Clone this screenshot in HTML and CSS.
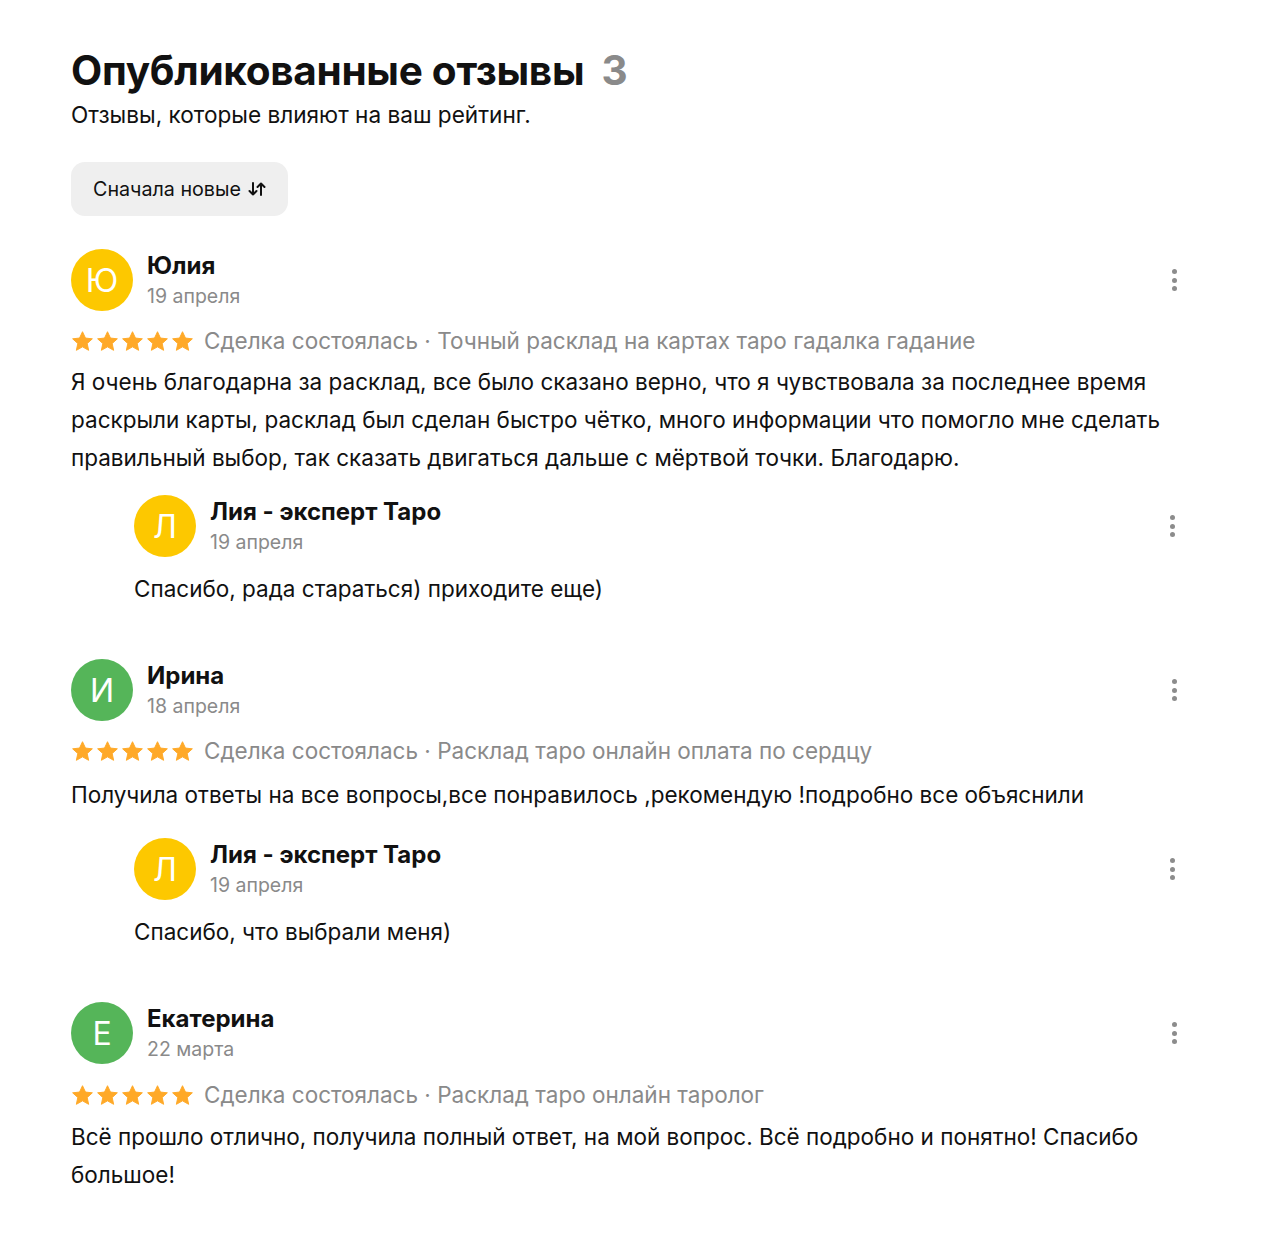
FILE: index.html
```html
<!DOCTYPE html>
<html lang="ru">
<head>
<meta charset="utf-8">
<link rel="stylesheet" href="styles.css">
</head>
<body>
<svg width="0" height="0" class="defs" aria-hidden="true">
  <defs>
    <symbol id="star" viewBox="0 0 24 24"><path d="M12 1.8l3.1 6.6 7.2.8-5.4 4.9 1.5 7.1L12 17.6l-6.4 3.6 1.5-7.1L1.7 9.2l7.2-.8z" fill="#ffa928" stroke="#ffa928" stroke-width="1" stroke-linejoin="round"/></symbol>
  </defs>
</svg>
<main class="page">
  <h1 class="title">Опубликованные отзывы <span class="count">3</span></h1>
  <p class="subtitle">Отзывы, которые влияют на ваш рейтинг.</p>
  <button class="sort">Сначала новые
    <svg class="sort-icon" viewBox="0 0 20 20" width="20" height="20"><path d="M6 4v11.5M2.5 12 6 15.5 9.5 12M14 16V4.5M10.5 8 14 4.5 17.5 8" fill="none" stroke="#111" stroke-width="2" stroke-linecap="round" stroke-linejoin="round"/></svg>
  </button>

  <section class="review">
    <div class="head">
      <div class="avatar yellow">Ю</div>
      <div class="who"><div class="name">Юлия</div><div class="date">19 апреля</div></div>
      <div class="kebab"><i></i><i></i><i></i></div>
    </div>
    <div class="meta"><span class="stars"><svg><use href="#star"/></svg><svg><use href="#star"/></svg><svg><use href="#star"/></svg><svg><use href="#star"/></svg><svg><use href="#star"/></svg></span>Сделка состоялась · Точный расклад на картах таро гадалка гадание</div>
    <p class="text">Я очень благодарна за расклад, все было сказано верно, что я чувствовала за последнее время раскрыли карты, расклад был сделан быстро чётко, много информации что помогло мне сделать правильный выбор, так сказать двигаться дальше с мёртвой точки. Благодарю.</p>
    <div class="reply">
      <div class="head">
        <div class="avatar yellow">Л</div>
        <div class="who"><div class="name">Лия - эксперт Таро</div><div class="date">19 апреля</div></div>
        <div class="kebab"><i></i><i></i><i></i></div>
      </div>
      <p class="reply-text">Спасибо, рада стараться) приходите еще)</p>
    </div>
  </section>

  <section class="review r-second">
    <div class="head">
      <div class="avatar green">И</div>
      <div class="who"><div class="name">Ирина</div><div class="date">18 апреля</div></div>
      <div class="kebab"><i></i><i></i><i></i></div>
    </div>
    <div class="meta"><span class="stars"><svg><use href="#star"/></svg><svg><use href="#star"/></svg><svg><use href="#star"/></svg><svg><use href="#star"/></svg><svg><use href="#star"/></svg></span>Сделка состоялась · Расклад таро онлайн оплата по сердцу</div>
    <p class="text">Получила ответы на все вопросы,все понравилось ,рекомендую !подробно все объяснили</p>
    <div class="reply">
      <div class="head">
        <div class="avatar yellow">Л</div>
        <div class="who"><div class="name">Лия - эксперт Таро</div><div class="date">19 апреля</div></div>
        <div class="kebab"><i></i><i></i><i></i></div>
      </div>
      <p class="reply-text">Спасибо, что выбрали меня)</p>
    </div>
  </section>

  <section class="review r-third">
    <div class="head">
      <div class="avatar green">Е</div>
      <div class="who"><div class="name">Екатерина</div><div class="date">22 марта</div></div>
      <div class="kebab"><i></i><i></i><i></i></div>
    </div>
    <div class="meta"><span class="stars"><svg><use href="#star"/></svg><svg><use href="#star"/></svg><svg><use href="#star"/></svg><svg><use href="#star"/></svg><svg><use href="#star"/></svg></span>Сделка состоялась · Расклад таро онлайн таролог</div>
    <p class="text">Всё прошло отлично, получила полный ответ, на мой вопрос. Всё подробно и понятно! Спасибо большое!</p>
  </section>
</main>
</body>
</html>
```
FILE: styles.css
```css
* { box-sizing: border-box; }
body {
  margin: 0;
  background: #fff;
  color: #111;
  font-family: Inter, Roboto, "Noto Sans", sans-serif;
}
.defs { position: absolute; }
.page {
  width: 1268px;
  padding: 48px 82px 40px 71px;
}
.title {
  margin: 0;
  font-size: 40.5px;
  line-height: 46px;
  font-weight: 700;
  letter-spacing: -0.3px;
}
.count { color: #8a8a8a; margin-left: 8px; }
.subtitle {
  margin: 6px 0 0;
  font-size: 22.6px;
  line-height: 30px;
  color: #111;
}
.sort {
  margin-top: 32px;
  height: 54px;
  padding: 0 21px 0 22px;
  border: 0;
  border-radius: 14px;
  background: #efefef;
  font-family: inherit;
  font-size: 19.7px;
  color: #111;
  display: inline-flex;
  align-items: center;
  gap: 6px;
}
.review { margin-top: 33px; }
.review + .review { margin-top: 51px; }
.head {
  display: flex;
  align-items: center;
  gap: 14px;
}
.avatar {
  width: 62px;
  height: 62px;
  border-radius: 50%;
  color: #fff;
  font-size: 32px;
  display: flex;
  align-items: center;
  justify-content: center;
  flex: none;
}
.yellow { background: #fdc800; }
.green { background: #55b559; }
.who { flex: 1; }
.name {
  font-size: 24px;
  font-weight: 700;
  line-height: 30px;
}
.date {
  font-size: 19.5px;
  line-height: 26px;
  color: #8a8a8a;
  margin-top: 2px;
}
.kebab {
  width: 24px;
  display: flex;
  flex-direction: column;
  align-items: center;
  gap: 3.5px;
}
.kebab i {
  width: 5px;
  height: 5px;
  border-radius: 50%;
  background: #8c8c8c;
}
.reply .kebab { margin-right: 2px; }
.meta {
  margin-top: 15px;
  font-size: 22.5px;
  line-height: 30px;
  color: #8a8a8a;
  display: flex;
  align-items: center;
}
.stars {
  display: inline-flex;
  gap: 2px;
  margin-right: 10px;
}
.stars svg {
  width: 23px;
  height: 23px;
}
.text {
  margin: 7px 0 0;
  font-size: 22.5px;
  line-height: 38px;
}
.reply {
  margin-top: 18px;
  padding-left: 63px;
}
.r-second .text { margin-top: 10px; }
.r-second .reply { margin-top: 24px; }
.r-third { margin-top: 52px; }
.r-third .meta { margin-top: 16px; }
.r-third .text { margin-top: 8px; }
.reply-text {
  margin: 13px 0 0;
  font-size: 22.5px;
  line-height: 38px;
}
```
